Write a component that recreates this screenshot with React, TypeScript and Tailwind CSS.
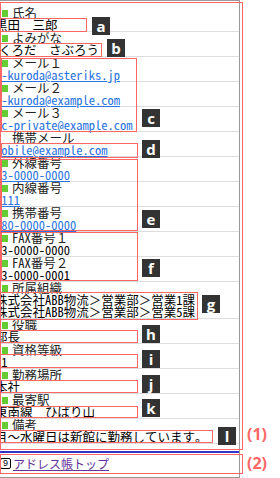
type Row = { label: string; values: string[]; kind?: 'text' | 'link'; mark?: boolean; shift?: string };

const rows: Row[] = [
  { label: '氏名', values: ['黒田　三郎'] },
  { label: 'よみがな', values: ['くろだ　さぶろう'], shift: '-ml-[1px]' },
  { label: 'メール１', values: ['t-kuroda@asteriks.jp'], kind: 'link' },
  { label: 'メール２', values: ['t-kuroda@example.com'], kind: 'link' },
  { label: 'メール３', values: ['pc-private@example.com'], kind: 'link' },
  { label: '携帯メール', values: ['mobile@example.com'], kind: 'link', mark: false },
  { label: '外線番号', values: ['03-0000-0000'], kind: 'link' },
  { label: '内線番号', values: ['1111'], kind: 'link' },
  { label: '携帯番号', values: ['080-0000-0000'], kind: 'link' },
  { label: 'FAX番号１', values: ['03-0000-0000'] },
  { label: 'FAX番号２', values: ['03-0000-0001'] },
  { label: '所属組織', values: ['株式会社ABB物流＞営業部＞営業1課', '株式会社ABB物流＞営業部＞営業5課'] },
  { label: '役職', values: ['部長'] },
  { label: '資格等級', values: ['S1'] },
  { label: '勤務場所', values: ['本社'] },
  { label: '最寄駅', values: ['東南線　ひばり山'] },
  { label: '備考', values: ['月～水曜日は新館に勤務しています。'] },
];

// annotation boxes drawn over the screenshot: [left, top, width, height]
const boxes: [number, number, number, number][] = [
  [0, 18, 87, 14],
  [0, 43, 102, 14],
  [1, 58, 136, 74],
  [1, 143, 137, 15],
  [1, 159, 137, 72],
  [1, 232, 137, 49],
  [0, 292, 198, 28],
  [0, 330, 138, 13],
  [0, 354, 138, 14],
  [0, 380, 138, 13],
  [0, 406, 138, 12],
  [0, 430, 213, 13],
  [0, 2, 243, 448],
  [0, 454, 243, 20],
];

const badges: [string, number, number][] = [
  ['a', 92, 17],
  ['b', 107, 39],
  ['c', 142, 109],
  ['d', 142, 140],
  ['e', 142, 210],
  ['f', 142, 259],
  ['g', 202, 295],
  ['h', 142, 325],
  ['i', 142, 350],
  ['j', 142, 375],
  ['k', 142, 399],
  ['l', 218, 427],
];

function Item({ row }: { row: Row }) {
  return (
    <div className="border-b border-[#dddddd]">
      <div className="flex items-center h-[12px] pl-[2px] leading-[12px] text-[#222]">
        {row.mark === false ? (
          <span className="w-[6px] mr-[4px]" />
        ) : (
          <span className="w-[6px] h-[7px] bg-[#66cc33] mr-[4px]" />
        )}
        {row.label}
      </div>
      {row.values.map(v => (
        <div key={v} className={`${row.shift ?? '-ml-[5px]'} h-[12px] leading-[12px] whitespace-nowrap`}>
          {row.kind === 'link' ? (
            <span className="text-[#2a73e0] underline underline-offset-1">{v}</span>
          ) : (
            <span className="text-black">{v}</span>
          )}
        </div>
      ))}
    </div>
  );
}

export default function App() {
  return (
    <div className="relative w-[280px] h-[478px] bg-white overflow-hidden font-['Noto_Sans_Mono_CJK_JP','Noto_Sans_CJK_JP',monospace] text-[12.5px]">
      <div className="w-[240px] h-[478px] border-r border-t border-b border-[#999999] overflow-hidden">
        <div className="pt-[6px]">
          {rows.map(row => (
            <Item key={row.label} row={row} />
          ))}
        </div>
        <div className="mt-[7px] border-t-2 border-[#3333cc] pt-[3px] flex items-center h-[20px]">
          <span className="w-[11px] h-[11px] border border-black rounded-[2px] text-[9px] leading-[9px] flex items-center justify-center mr-[2px] font-['Liberation_Sans',sans-serif]">
            9
          </span>
          <span className="text-[#663399] underline underline-offset-1 text-[12px]">アドレス帳トップ</span>
        </div>
      </div>

      {boxes.map(([l, t, w, h], i) => (
        <div
          key={i}
          className="absolute border border-[#ff6666] pointer-events-none"
          style={{ left: l, top: t, width: w, height: h }}
        />
      ))}

      {badges.map(([c, l, t]) => (
        <div
          key={c}
          className="absolute w-[18px] h-[18px] bg-[#333333] text-white font-bold text-[15px] leading-[17px] flex items-center justify-center font-['Open_Sans',sans-serif]"
          style={{ left: l, top: t }}
        >
          {c}
        </div>
      ))}

      <div className="absolute left-[247px] top-[424px] text-[#ff6666] font-bold text-[16px] leading-[20px] font-['Open_Sans',sans-serif]">
        (1)
      </div>
      <div className="absolute left-[247px] top-[453px] text-[#ff6666] font-bold text-[16px] leading-[20px] font-['Open_Sans',sans-serif]">
        (2)
      </div>
    </div>
  );
}
